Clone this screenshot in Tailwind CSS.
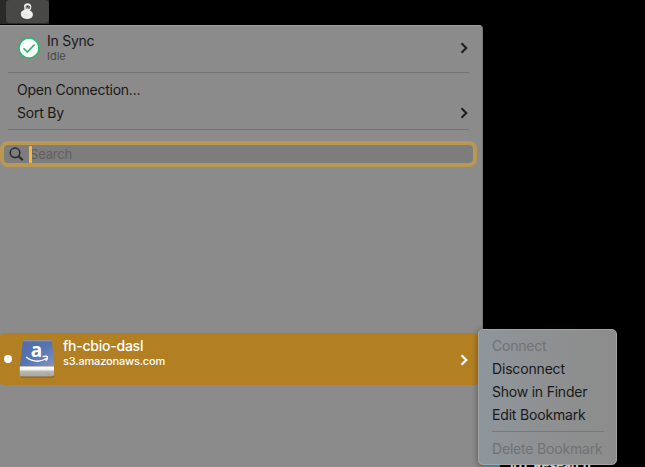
<!DOCTYPE html>
<html lang="en">
<head>
<meta charset="utf-8">
<title>Connections</title>
<script src="https://cdn.jsdelivr.net/npm/@tailwindcss/browser@4"></script>
</head>
<body class="relative h-[467px] w-[645px] overflow-hidden bg-black font-['Inter','Noto_Sans',sans-serif] text-[14px] leading-[23px] text-[#191919]">
<header class="flex h-[25px] w-[49px] border-b border-black bg-[#2a2a29] pl-1.5">
  <div class="flex h-[23px] w-[43px] justify-center rounded-[4px] bg-[#484846]">
    <svg class="-ml-px mt-[2px] h-[18px] w-[16px]" viewBox="0 0 16 18">
      <path d="M5 4C5 .2 12 0 12.300 4.500C12.500 7 11.500 8 10.800 8.500C15.500 10 15 16.500 9 17C3 17.500 .5 13 2.500 9.500L5.500 7.500Z" fill="#eeeeed"/>
      <path d="M6.500 4.500L8 3L10 3.500L11.400 5L10.800 7.300L8.700 6.500L7 7Z" fill="#777775"/>
      <path d="M8 4.500h1M10.200 4.800h.6" stroke="#222" stroke-width="1"/>
      <path d="M4 11.500q2 2 5 1.500" fill="none" stroke="#d2d2d0" stroke-width=".7"/>
    </svg>
  </div>
</header>

<main class="flex h-[442px] w-[483px] flex-col rounded-tr-[4px] border-r border-t border-r-[#777] border-t-[#a0a0a0] bg-[#8b8b8b]">
  <section class="mx-2 flex h-[47px] w-[461px] shrink-0 border-b border-[#747474]">
    <svg class="ml-[10px] mt-[11px] h-[22px] w-[22px] shrink-0" viewBox="0 0 22 22">
      <circle cx="11" cy="11" r="10" fill="#fff" stroke="#27b966" stroke-width="1.500"/>
      <path d="M5.500 11.300L9.300 15L16.500 7.500" fill="none" stroke="#27b966" stroke-width="1.600"/>
    </svg>
    <div class="ml-[7px] grow pt-[6px]">
      <p class="h-[18px] leading-[17px] tracking-[-0.26px]">In Sync</p>
      <p class="text-[11px] leading-[13px] text-[#484848]">Idle</p>
    </div>
    <svg class="mr-px mt-[16px] h-[12px] w-[8px]" viewBox="0 0 8 12"><path d="M1.500 1.300L6.300 6L1.500 10.700" fill="none" stroke="#1d1d1d" stroke-width="2"/></svg>
  </section>

  <section class="mx-2 h-[57px] w-[461px] shrink-0 border-b border-[#747474] pl-[9px] pt-[5px]">
    <p class="w-[123px] whitespace-nowrap tracking-[-0.25px]">Open Connection...</p>
    <div class="flex items-center justify-between pr-px">
      <p class="tracking-[-0.22px]">Sort By</p>
      <svg class="h-[12px] w-[8px]" viewBox="0 0 8 12"><path d="M1.500 1.300L6.300 6L1.500 10.700" fill="none" stroke="#1d1d1d" stroke-width="2"/></svg>
    </div>
  </section>

  <div class="mt-[11px] flex h-[26px] w-[477px] shrink-0 items-center rounded-[8px] border-4 border-[#b99853] bg-[#7d7d7d] pl-[5px]">
    <svg class="h-[14px] w-[15px]" viewBox="0 0 15 14"><circle cx="6" cy="5.800" r="4.800" fill="none" stroke="#292929" stroke-width="1.500"/><path d="M9.600 9.200L13.800 13.300" stroke="#292929" stroke-width="1.900"/></svg>
    <span class="relative z-10 ml-[5px] h-[17px] w-[3px] shrink-0 rounded-[1px] bg-[#f8b83e]"></span>
    <span class="-ml-[2px] pt-px text-[13px] tracking-[-0.2px] text-[#606060]">Search</span>
  </div>

  <section class="mt-[166px] flex h-[52px] w-[478px] shrink-0 rounded-[4px] bg-[#b28022] text-white">
    <span class="ml-1 mt-[22px] h-2 w-2 rounded-full bg-white"></span>
    <svg class="ml-[7px] mt-[5px] h-[41px] w-[36px]" viewBox="0 0 36 41">
      <defs>
        <linearGradient id="cover" x1="0" x2="1" y1="0" y2="1"><stop stop-color="#506ca8"/><stop offset=".5" stop-color="#5574b2"/><stop offset="1" stop-color="#8396c5"/></linearGradient>
        <linearGradient id="base" x2="0" y2="1"><stop stop-color="#fff"/><stop offset=".36" stop-color="#efefed"/><stop offset=".44" stop-color="#b9b9b5"/><stop offset="1" stop-color="#a6a6a1"/></linearGradient>
      </defs>
      <path d="M2 37.500h33v2H2z" fill="#815d20"/>
      <path d="M4 2.500h29l2 26H.8z" fill="url(#cover)"/>
      <path d="M4 2.800h29" stroke="#96a3c3" stroke-width=".8"/>
      <path d="M.8 28.500H35v8q0 2-2 2H3Q.8 38.500 .8 36.500z" fill="url(#base)"/>
      <path d="M28 35l1.500 1L31 35" fill="none" stroke="#bda157" stroke-width="1"/>
      <text x="17.500" y="18.500" text-anchor="middle" font-family="Open Sans, sans-serif" font-size="19" font-weight="700" fill="#fff">a</text>
      <path d="M7 19Q17 26.500 27.500 20.500M23.700 18.600Q27.800 17.600 28.300 18.800Q28.800 20.300 26.800 22.800" fill="none" stroke="#fff" stroke-width="1.400"/>
    </svg>
    <div class="ml-[8px] grow pt-[4px]">
      <p class="h-[17px] font-medium leading-[17px] tracking-[-0.24px]">fh-cbio-dasl</p>
      <p class="text-[11px] font-medium leading-[15px] tracking-[-0.17px]">s3.amazonaws.com</p>
    </div>
    <svg class="mr-[10px] mt-[21px] h-[12px] w-[8px]" viewBox="0 0 8 12"><path d="M1.500 1.300L6.300 6L1.500 10.700" fill="none" stroke="#fff" stroke-width="2.200"/></svg>
  </section>
</main>

<div class="absolute left-[483px] top-[459px] flex h-[12px] w-[120px] text-[13px] font-bold leading-[12px] text-white">
  <span class="w-[17px] bg-[#51a6cf]"></span><span class="ml-[8px] whitespace-nowrap tracking-[-0.3px]">101, Research</span>
</div>

<nav class="absolute left-[478px] top-[329px] h-[136px] w-[139px] whitespace-nowrap rounded-[5px] border border-[#a4a4a4] bg-linear-to-r from-[#8e969c] via-[#8e9091] to-[#8c8c8c] pl-[13px] pt-[4px] shadow-[0_1px_6px_rgba(0,0,0,0.4)]">
  <p class="tracking-[-0.22px] text-[#707274]">Connect</p>
  <p class="tracking-[-0.17px]">Disconnect</p>
  <p class="tracking-[-0.22px]">Show in Finder</p>
  <p class="tracking-[-0.18px]">Edit Bookmark</p>
  <div class="mb-[5px] mt-[5px] h-px w-[112px] bg-[#787878]"></div>
  <p class="tracking-[-0.18px] text-[#707274]">Delete Bookmark</p>
</nav>
</body>
</html>
